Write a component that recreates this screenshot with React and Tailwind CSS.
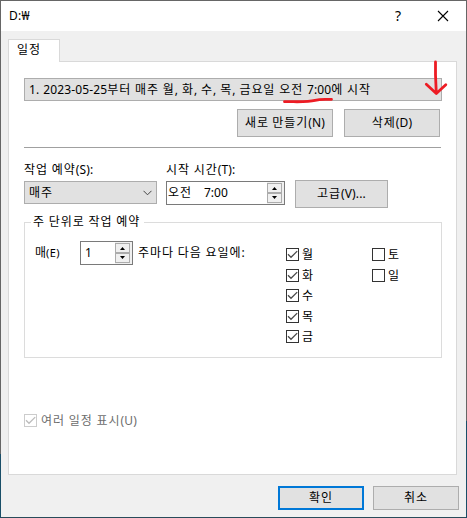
import React from "react";

// Korean runs are tracked wider than the Latin letters and digits beside them.
function T({ children }) {
  return String(children)
    .split(/([가-힣]+)/)
    .filter(Boolean)
    .map((run, i) => (
      <span key={i} className={/[가-힣]/.test(run) ? "tracking-[0.95px]" : "tracking-[0.15px]"}>
        {run}
      </span>
    ));
}

function Button({ className = "", children }) {
  return (
    <button
      className={`block border border-[#adadad] bg-[#e1e1e1] text-center whitespace-nowrap ${className}`}
    >
      <T>{children}</T>
    </button>
  );
}

function Check({ checked = true, disabled = false }) {
  const color = disabled ? "#bcbcbc" : "#4a4a4a";
  return (
    <span
      className={`flex h-[13px] w-[13px] shrink-0 border bg-white ${
        disabled ? "border-[#cccccc]" : "border-[#333333]"
      }`}
    >
      {checked && (
        <svg width="11" height="11" viewBox="0 0 11 11" fill="none">
          <path d="M1 5.3L4 8.3L10.2 2.1" stroke={color} strokeWidth="1.3" />
        </svg>
      )}
    </span>
  );
}

function Spinner() {
  return (
    <span className="flex h-full w-[17px] flex-col bg-[#f0f0f0] py-px pr-px">
      {["M3 6h5L5.5 3z", "M3 2h5L5.5 5z"].map((d) => (
        <span
          key={d}
          className="flex h-[10px] w-[15px] items-center justify-center border border-[#acacac] bg-[#f0f0f0]"
        >
          <svg width="11" height="8" viewBox="0 0 11 8" className="shrink-0">
            <path d={d} fill="#000" />
          </svg>
        </span>
      ))}
    </span>
  );
}

function Day({ label, checked = true, className = "" }) {
  return (
    <label className={`flex h-[13px] items-center gap-[3px] ${className}`}>
      <Check checked={checked} />
      <span className="leading-[13px]">{label}</span>
    </label>
  );
}

export default function App() {
  return (
    <div className="flex h-[518px] w-[467px] overflow-hidden bg-[#f0f0f0] font-['Noto_Sans','Noto_Sans_CJK_KR',sans-serif] text-[12px] leading-[16px] text-black [word-spacing:0.5px]">
      <div className="flex w-px shrink-0 flex-col bg-[#666666]">
        <span className="mt-[454px] h-16 bg-[#194e68]" />
      </div>
      <div className="flex w-[465px] shrink-0 flex-col border-t border-b border-t-[#666666] border-b-[#294b5a]">
        <header className="flex h-[30px] shrink-0 items-center bg-white pl-2">
          <h1 className="flex-1 tracking-[0.3px]">D:₩</h1>
          <span className="mr-[36px] text-[14px]">?</span>
          <svg width="12" height="12" viewBox="0 0 12 12" className="mr-[17px]">
            <path d="M1 1L11 11M11 1L1 11" stroke="#000" strokeWidth="1.1" />
          </svg>
        </header>

        <div className="z-10 mt-2 ml-[7px] h-[23px] w-[52px] shrink-0 border border-b-0 border-[#d9d9d9] bg-white pt-[2px] pl-2">
          <T>일정</T>
        </div>
        <main className="-mt-px ml-[7px] flex h-[414px] w-[449px] shrink-0 flex-col border border-[#d9d9d9] bg-white pl-[15px]">
          <div className="relative mt-4 h-[23px] w-[418px] shrink-0 border border-[#adadad] bg-[#e1e1e1] pt-[3px] pl-1 whitespace-nowrap">
            <T>1. 2023-05-25부터 매주 월, 화, 수, 목, 금요일 오전 7:00에 시작</T>
            <svg
              width="190"
              height="52"
              viewBox="0 0 190 52"
              fill="none"
              className="absolute -top-[23px] left-[245px]"
              stroke="#ed1c24"
              strokeWidth="2.8"
              strokeLinecap="round"
              strokeLinejoin="round"
            >
              <path d="M14.5 45.7C25 45.5 37 46.5 45 44.4C51 42.8 56 43.6 61.5 43.4" />
              <path d="M165.5 6V19L166.3 37.5M156.3 28.2L166.3 37.5L175.8 28.8" />
            </svg>
          </div>
          <div className="mt-2 flex w-[416px] shrink-0 justify-end gap-[11px]">
            <Button className="h-7 w-24">새로 만들기(N)</Button>
            <Button className="h-7 w-24">삭제(D)</Button>
          </div>
          <hr className="mt-[10px] w-[417px] border-[#a0a0a0]" />

          <div className="mt-[14px] flex shrink-0">
            <div className="w-[142px]">
              <div className="whitespace-nowrap">
                <T>작업 예약(S):</T>
              </div>
              <div className="mt-[3px] flex h-[23px] w-[133px] items-center justify-between border border-[#adadad] bg-[#e1e1e1] pr-1 pl-1">
                <span>
                  <T>매주</T>
                </span>
                <svg width="9" height="6" viewBox="0 0 9 6" fill="none">
                  <path d="M.5 .8L4.5 4.8L8.5 .8" stroke="#444" />
                </svg>
              </div>
            </div>
            <div className="w-[129px]">
              <div className="whitespace-nowrap">
                <T>시작 시간(T):</T>
              </div>
              <div className="mt-[3px] flex h-6 w-[119px] items-center justify-between border border-[#7a7a7a] bg-white pl-px">
                <span>
                  <T>오전</T>
                  <span className="ml-3">7:00</span>
                </span>
                <Spinner />
              </div>
            </div>
            <Button className="mt-[18px] h-7 w-[93px]">고급(V)...</Button>
          </div>

          <section className="mt-[14px] flex h-[136px] w-[418px] shrink-0 border border-[#dcdcdc]">
            <div className="w-[261px]">
              <h2 className="-mt-[9px] ml-[6px] w-[113px] bg-white pl-[2px] whitespace-nowrap">
                <T>주 단위로 작업 예약</T>
              </h2>
              <div className="mt-[11px] flex items-center pl-[10px] whitespace-nowrap">
                <span className="w-[45px]">
                  매<span className="text-[11px] tracking-[0.4px]">(E)</span>
                </span>
                <div className="flex h-6 w-[53px] items-center justify-between border border-[#7a7a7a] bg-white pl-1">
                  1
                  <Spinner />
                </div>
                <span className="ml-[5px]">
                  <T>주마다 다음 요일에:</T>
                </span>
              </div>
            </div>
            <div className="flex w-[86px] flex-col pt-[25px]">
              <Day label="월" />
              <Day label="화" className="mt-2" />
              <Day label="수" className="mt-[7px]" />
              <Day label="목" className="mt-2" />
              <Day label="금" className="mt-[7px]" />
            </div>
            <div className="flex flex-col pt-[25px]">
              <Day label="토" checked={false} />
              <Day label="일" checked={false} className="mt-2" />
            </div>
          </section>

          <label className="mt-14 flex h-[13px] items-center gap-1 text-[#6d6d6d]">
            <Check disabled />
            <span className="whitespace-nowrap">
              <T>여러 일정 표시(U)</T>
            </span>
          </label>
        </main>

        <footer className="mt-[11px] flex shrink-0 justify-end gap-[9px] pr-[7px]">
          <button className="h-6 w-[86px] border-2 border-[#0078d7] bg-[#e1e1e1]">
            <T>확인</T>
          </button>
          <Button className="h-6 w-[86px]">취소</Button>
        </footer>
      </div>
      <div className="flex w-px shrink-0 flex-col bg-[#666666]">
        <span className="mt-[421px] h-[97px] bg-[#194e68]" />
      </div>
    </div>
  );
}
